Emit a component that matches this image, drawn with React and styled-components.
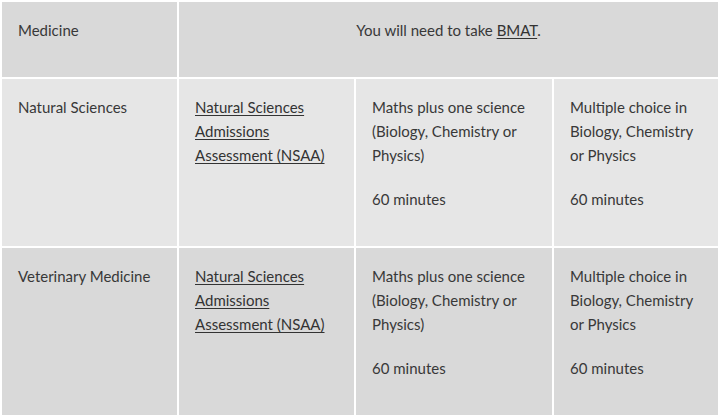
import { Fragment } from "react";
import styled, { createGlobalStyle } from "styled-components";

const GlobalStyle = createGlobalStyle`
  html, body {
    margin: 0;
    padding: 0;
    background: #fff;
  }
  body {
    font-family: Lato, "Liberation Sans", sans-serif;
    color: #383838;
  }
`;

const Table = styled.div`
  display: grid;
  grid-template-columns: 175px 175px 196px 164px;
  gap: 2px;
  padding: 2px;
  width: max-content;
  background: #fff;
`;

const Cell = styled.div`
  background: ${(p) => (p.$light ? "#e6e6e6" : "#d9d9d9")};
  padding: 16px 16px 15px 16px;
  font-size: 15px;
  line-height: 24px;
  text-align: ${(p) => (p.$center ? "center" : "left")};
  grid-column: ${(p) => (p.$span ? `span ${p.$span}` : "auto")};
`;

const Para = styled.p`
  margin: 0 0 20px;
`;

const Link = styled.a`
  color: #333;
  text-decoration: underline;
  text-underline-offset: 2px;
`;

const rows = [
  { subject: "Natural Sciences", light: true },
  { subject: "Veterinary Medicine", light: false },
];

export default function App() {
  return (
    <>
      <GlobalStyle />
      <Table>
        <Cell>
          <Para>Medicine</Para>
        </Cell>
        <Cell $span={3} $center>
          <Para>
            You will need to take <Link href="#">BMAT</Link>.
          </Para>
        </Cell>
        {rows.map((row) => (
          <Fragment key={row.subject}>
            <Cell $light={row.light}>
              <Para>{row.subject}</Para>
            </Cell>
            <Cell $light={row.light}>
              <Para>
                <Link href="#">Natural Sciences Admissions Assessment (NSAA)</Link>
              </Para>
            </Cell>
            <Cell $light={row.light}>
              <Para>Maths plus one science (Biology, Chemistry or Physics)</Para>
              <Para>60 minutes</Para>
            </Cell>
            <Cell $light={row.light}>
              <Para>Multiple choice in Biology, Chemistry or Physics</Para>
              <Para>60 minutes</Para>
            </Cell>
          </Fragment>
        ))}
      </Table>
    </>
  );
}
